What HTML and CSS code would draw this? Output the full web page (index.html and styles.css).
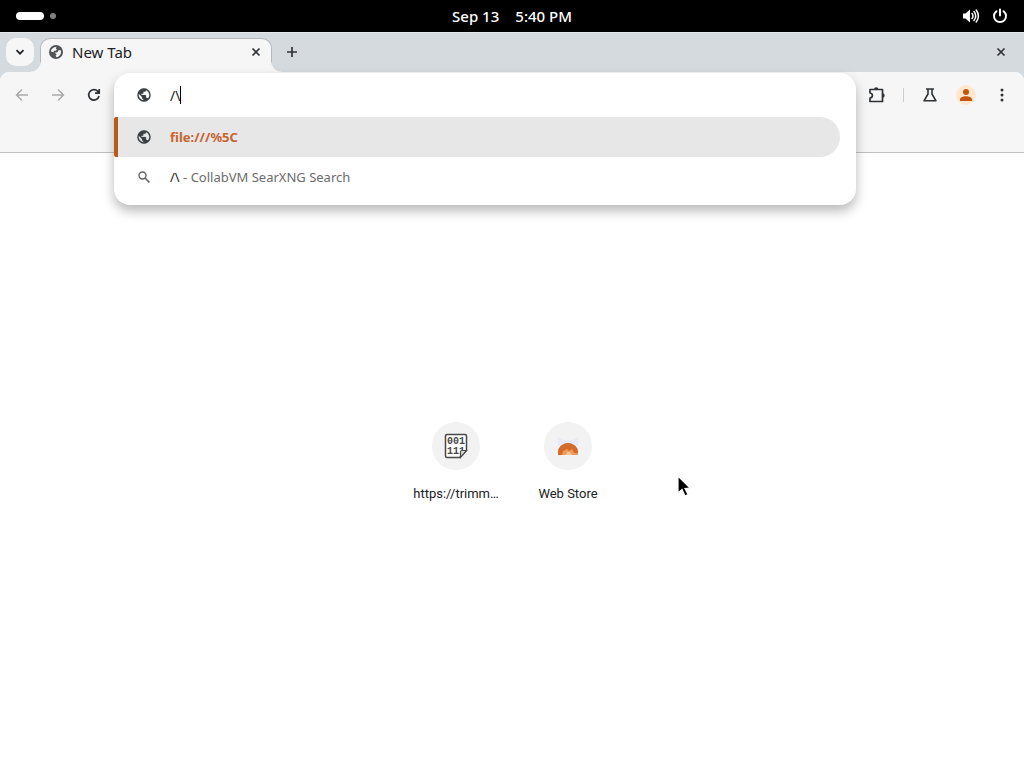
FILE: index.html
```html
<!DOCTYPE html>
<html lang="en">
<head>
    <meta charset="utf-8">
    <title>New Tab</title>
    <link rel="stylesheet" href="styles.css">
</head>
<body>
    <svg class="symbols" aria-hidden="true">
        <symbol id="globe" viewBox="0 0 24 24">
            <path d="M12 2a10 10 0 1 0 0 20 10 10 0 0 0 0-20zm-1 17.900A8 8 0 0 1 4.200 10.200L9 15v1a2 2 0 0 0 2 2zm6.900-2.500A2 2 0 0 0 16 16h-1v-3a1 1 0 0 0-1-1H8v-2h2a1 1 0 0 0 1-1V7h2a2 2 0 0 0 2-2v-.4a8 8 0 0 1 2.900 12.800z" fill="#3c4043" stroke="#3c4043" stroke-width=".3"/>
        </symbol>
        <symbol id="close" viewBox="0 0 10 10">
            <path d="M1.500 1.500l7 7M8.500 1.500l-7 7" fill="none" stroke="#303336" stroke-width="1.700"/>
        </symbol>
    </svg>

    <header class="panel">
        <button class="workspaces" aria-label="Activities">
            <span class="pill"></span>
            <span class="dot"></span>
        </button>
        <button class="clock"><span>Sep 13</span><span>5:40 PM</span></button>
        <button class="system" aria-label="System menu">
            <svg width="18" height="16" viewBox="0 0 18 16">
                <path d="M1 5.500h2.500L8 1.500v13L3.500 10.500H1z" fill="#fff"/>
                <path d="M10 5.500q2 2.500 0 5M12 3.500q3.500 4.500 0 9M14.200 2q4.400 6 0 12" fill="none" stroke="#fff" stroke-width="1.500" stroke-linecap="round"/>
            </svg>
            <svg width="16" height="16" viewBox="0 0 16 16">
                <path d="M4.500 3.200a6 6 0 1 0 7 0M8 1.500v6" fill="none" stroke="#fff" stroke-width="2" stroke-linecap="round"/>
            </svg>
        </button>
    </header>

    <div class="tabstrip">
        <button class="tab-search" aria-label="Search tabs">
            <svg width="10" height="10" viewBox="0 0 10 10"><path d="M1.500 3.200L5 6.700l3.500-3.500" fill="none" stroke="#202124" stroke-width="1.700"/></svg>
        </button>
        <div class="tab">
            <svg width="16" height="16" viewBox="0 0 16 16">
                <circle cx="8" cy="8" r="7" fill="#505357"/>
                <path d="M2.800 7.500C3.500 4.800 5.300 3 8.500 2.800L7.800 4.500 9 5.500 7.500 6.800H6L5.500 8.300z" fill="#f6f6f7"/>
                <path d="M6.500 8.800l3-.6 1-2h2.300c.8 3.300-.8 6.300-4.300 7l-1-1.400 1.300-1.500z" fill="#f6f6f7"/>
            </svg>
            <span class="tab-title">New Tab</span>
            <button class="tab-close" aria-label="Close tab"><svg width="10" height="10"><use href="#close"/></svg></button>
        </div>
        <button class="new-tab" aria-label="New tab">
            <svg width="12" height="12" viewBox="0 0 12 12"><path d="M6 1v10M1 6h10" fill="none" stroke="#303336" stroke-width="1.700"/></svg>
        </button>
        <button class="window-close" aria-label="Close window"><svg width="10" height="10"><use href="#close"/></svg></button>
    </div>

    <div class="toolbar">
        <nav class="nav">
            <button class="icon-button" aria-label="Back" disabled>
                <svg width="16" height="16" viewBox="0 0 16 16"><path d="M14 8H3M8 2.500L2.500 8 8 13.500" fill="none" stroke="#aaa" stroke-width="1.500"/></svg>
            </button>
            <button class="icon-button" aria-label="Forward" disabled>
                <svg width="16" height="16" viewBox="0 0 16 16"><path d="M2 8h11M8 2.500L13.500 8 8 13.500" fill="none" stroke="#aaa" stroke-width="1.500"/></svg>
            </button>
            <button class="icon-button" aria-label="Reload">
                <svg width="16" height="16" viewBox="0 0 16 16"><path d="M13 9a5.200 5.200 0 1 1-1.200-4.600L13 5.700M13.200 2v4.200H9" fill="none" stroke="#303336" stroke-width="1.700"/></svg>
            </button>
        </nav>

        <div class="omnibox">
            <div class="popup">
                <div class="row">
                    <svg width="16" height="16"><use href="#globe"/></svg>
                    <div class="query">
                        <input class="address" type="text" aria-label="Address and search bar" value="/\">
                        <span class="caret"></span>
                    </div>
                </div>
                <a class="row suggestion selected" href="file:///%5C">
                    <svg width="16" height="16"><use href="#globe"/></svg>
                    <span class="url">file:///%5C</span>
                </a>
                <a class="row suggestion" href="#search">
                    <svg width="16" height="16" viewBox="0 0 16 16"><circle cx="6.500" cy="6.500" r="3.500" fill="none" stroke="#5f6368" stroke-width="1.400"/><path d="M9 9l4.500 4.500" stroke="#5f6368" stroke-width="1.600"/></svg>
                    <span>/\<span class="engine"> - CollabVM SearXNG Search</span></span>
                </a>
            </div>
        </div>

        <div class="actions">
            <button class="icon-button" aria-label="Extensions">
                <svg width="18" height="18" viewBox="0 0 18 18">
                    <path d="M2 3.500h12.500V15.500H2v-3.500q2.400-.4 2.400-2.500T2 7z" fill="none" stroke="#303336" stroke-width="1.700" stroke-linejoin="round"/>
                    <path d="M6 3.500a2.200 2.200 0 0 1 4.400 0zM14.500 7.300a2.200 2.200 0 0 1 0 4.400z" fill="#303336"/>
                </svg>
            </button>
            <span class="divider"></span>
            <button class="icon-button" aria-label="Experiments">
                <svg width="16" height="16" viewBox="0 0 16 16"><path d="M4 2h8M6 2v5L2 13.800h12L10 7V2" fill="none" stroke="#303336" stroke-width="1.600" stroke-linejoin="round"/></svg>
            </button>
            <button class="icon-button" aria-label="Profile">
                <span class="avatar"><svg width="14" height="14" viewBox="0 0 14 14"><circle cx="7" cy="4" r="3" fill="#c4540f"/><path d="M1 13v-1.500C1 9.300 4 8.300 7 8.300s6 1 6 3.200V13z" fill="#c4540f"/></svg></span>
            </button>
            <button class="icon-button" aria-label="Menu">
                <svg width="16" height="16" viewBox="0 0 16 16" fill="#303336"><circle cx="8" cy="3" r="1.500"/><circle cx="8" cy="8" r="1.500"/><circle cx="8" cy="13" r="1.500"/></svg>
            </button>
        </div>
    </div>

    <main class="page">
        <a class="tile" href="#trimm">
            <span class="tile-icon">
                <svg width="24" height="26" viewBox="0 0 24 26">
                    <path d="M3 1.500h18q1.500 0 1.500 1.500v14.500l-7 7H3q-1.500 0-1.500-1.500V3Q1.500 1.500 3 1.500z" fill="#fff" stroke="#48484a" stroke-width="1.500"/>
                    <text class="bits" x="3" y="11">001</text>
                    <text class="bits" x="3" y="21">111</text>
                    <path d="M22.500 17.500h-4.500q-1.500 0-1.500 1.500v5.500z" fill="#ddd" stroke="#48484a" stroke-width="1.200"/>
                </svg>
            </span>
            <span class="tile-title">https://trimm…</span>
        </a>
        <a class="tile" href="#store">
            <span class="tile-icon">
                <svg width="24" height="24" viewBox="0 0 24 24">
                    <path d="M2 3l5 3h10l5-3v9H2z" fill="#e6ebf5"/>
                    <path d="M2 21v-3a10 9 0 0 1 20 0v3z" fill="#f09a58"/>
                    <path d="M2 21v-3a10 9 0 0 1 20 0v1h-4l-2-4-3 2-2-2-4 2-1 4z" fill="#d56b2b"/>
                    <path d="M10 21l1-3h3l2 3z" fill="#f7c69d"/>
                </svg>
            </span>
            <span class="tile-title">Web Store</span>
        </a>
    </main>

    <svg class="cursor" width="16" height="24" viewBox="0 0 16 24" aria-hidden="true">
        <path d="M2 1v17l4-3.500 3 6.500 3-1.500-3-6 5-.5z" fill="#000" stroke="#fff" stroke-width="1.200"/>
    </svg>
</body>
</html>
```

FILE: styles.css
```css
* {
    box-sizing: border-box;
}

body {
    margin: 0;
    min-height: 100vh;
    display: flex;
    flex-direction: column;
    background-color: #fff;
    color: #202124;
    font-family: "Noto Sans", sans-serif;
    font-size: 13px;
}

button {
    display: flex;
    align-items: center;
    justify-content: center;
    padding: 0;
    border: none;
    background: none;
    color: inherit;
    font: inherit;
}

a {
    color: inherit;
    text-decoration: none;
}

svg {
    display: block;
    flex: none;
}

.symbols {
    position: absolute;
    width: 0;
    height: 0;
}

/* desktop panel */
.panel {
    display: grid;
    grid-template-columns: 1fr auto 1fr;
    align-items: center;
    height: 32px;
    padding: 0 16px;
    background-color: #000;
    color: #fff;
}

.workspaces {
    justify-self: start;
    gap: 6px;
}

.pill {
    width: 28px;
    height: 8px;
    border-radius: 4px;
    background-color: #fff;
}

.dot {
    width: 6px;
    height: 6px;
    border-radius: 50%;
    background-color: #808080;
}

.clock {
    gap: 16px;
    font-size: 15px;
    font-weight: 500;
    line-height: 20px;
}

.system {
    justify-self: end;
    gap: 12px;
}

/* tabs */
.tabstrip {
    display: flex;
    height: 40px;
    padding: 6px 8px 0 6px;
    background-color: #d5dade;
    box-shadow: inset 0 1px #e6e9eb;
}

.tab-search {
    width: 28px;
    height: 28px;
    border-radius: 10px;
    background-color: #f6f6f7;
}

.tab {
    position: relative;
    display: flex;
    align-items: center;
    width: 232px;
    height: 34px;
    margin-left: 6px;
    padding: 0 7px 7px;
    border: 1px solid #b4b8bc;
    border-bottom: none;
    border-radius: 10px 10px 0 0;
    background-color: #f6f6f7;
    font-size: 15px;
    line-height: 20px;
}

/* curved feet of the active tab */
.tab::before,
.tab::after {
    content: "";
    position: absolute;
    bottom: 0;
    width: 10px;
    height: 10px;
}

.tab::before {
    right: 100%;
    background: radial-gradient(circle at 0 0, transparent 9px, #f6f6f7 10px);
}

.tab::after {
    left: 100%;
    background: radial-gradient(circle at 100% 0, transparent 9px, #f6f6f7 10px);
}

.tab-title {
    flex: 1;
    margin-left: 8px;
}

.tab-close,
.new-tab,
.window-close {
    width: 16px;
    height: 28px;
}

.new-tab {
    margin-left: 12px;
}

.window-close {
    width: 30px;
    margin-left: auto;
}

/* toolbar */
.toolbar {
    display: flex;
    height: 81px;
    border-bottom: 1px solid #c0c0c0;
    background: radial-gradient(circle at 10px 10px, #f6f6f7 10px, #d5dade 11px) left top / 10px 10px no-repeat,
        radial-gradient(circle at 0 10px, #f6f6f7 10px, #d5dade 11px) right top / 10px 10px no-repeat,
        #f6f6f7;
}

.nav,
.actions {
    display: flex;
    align-items: center;
    height: 46px;
}

.nav {
    gap: 8px;
    padding: 0 6px 0 8px;
}

.actions {
    gap: 8px;
    padding: 0 8px 0 7px;
}

.icon-button {
    width: 28px;
    height: 28px;
}

.divider {
    width: 1px;
    height: 14px;
    margin: 0 4px;
    background-color: #ccc;
}

.avatar {
    display: flex;
    align-items: center;
    justify-content: center;
    width: 20px;
    height: 20px;
    border-radius: 50%;
    background-color: #ffe8cf;
}

.omnibox {
    position: relative;
    flex: 1;
}

.popup {
    position: absolute;
    top: 1px;
    left: 0;
    right: 0;
    padding-bottom: 8px;
    overflow: hidden;
    border-radius: 16px;
    background-color: #fff;
    box-shadow: 0 6px 12px rgba(0, 0, 0, 0.28);
}

.row {
    display: flex;
    align-items: center;
    gap: 18px;
    height: 44px;
    padding-left: 22px;
}

.suggestion {
    height: 40px;
    margin-right: 16px;
    border-radius: 0 20px 20px 0;
}

.selected {
    padding-left: 18px;
    border-left: 4px solid #b85a1c;
    border-radius: 2px 20px 20px 2px;
    background-color: #e7e7e7;
}

.url {
    color: #c8642f;
    font-weight: 700;
}

.engine {
    color: #6b6b6b;
}

.query {
    display: flex;
    align-items: center;
}

.address {
    field-sizing: content;
    padding: 0;
    border: none;
    outline: none;
    background: none;
    color: #202124;
    font: inherit;
    font-size: 14px;
}

.caret {
    width: 1px;
    height: 18px;
    background-color: #000;
}

/* new tab page */
.page {
    flex: 1;
    display: flex;
    align-items: flex-start;
    justify-content: center;
    padding-top: 253px;
}

.tile {
    display: flex;
    flex-direction: column;
    align-items: center;
    width: 112px;
    padding: 16px 12px;
    color: #202124;
    font-family: Roboto, sans-serif;
}

.tile-icon {
    display: flex;
    align-items: center;
    justify-content: center;
    width: 48px;
    height: 48px;
    border-radius: 50%;
    background-color: #f2f2f2;
}

.bits {
    fill: #48484a;
    font-family: "Liberation Mono", monospace;
    font-size: 10px;
    font-weight: bold;
}

.tile-title {
    margin-top: 16px;
    white-space: nowrap;
}

/* pointer floats over the page */
.cursor {
    position: absolute;
    top: 475px;
    left: 676px;
}
```
